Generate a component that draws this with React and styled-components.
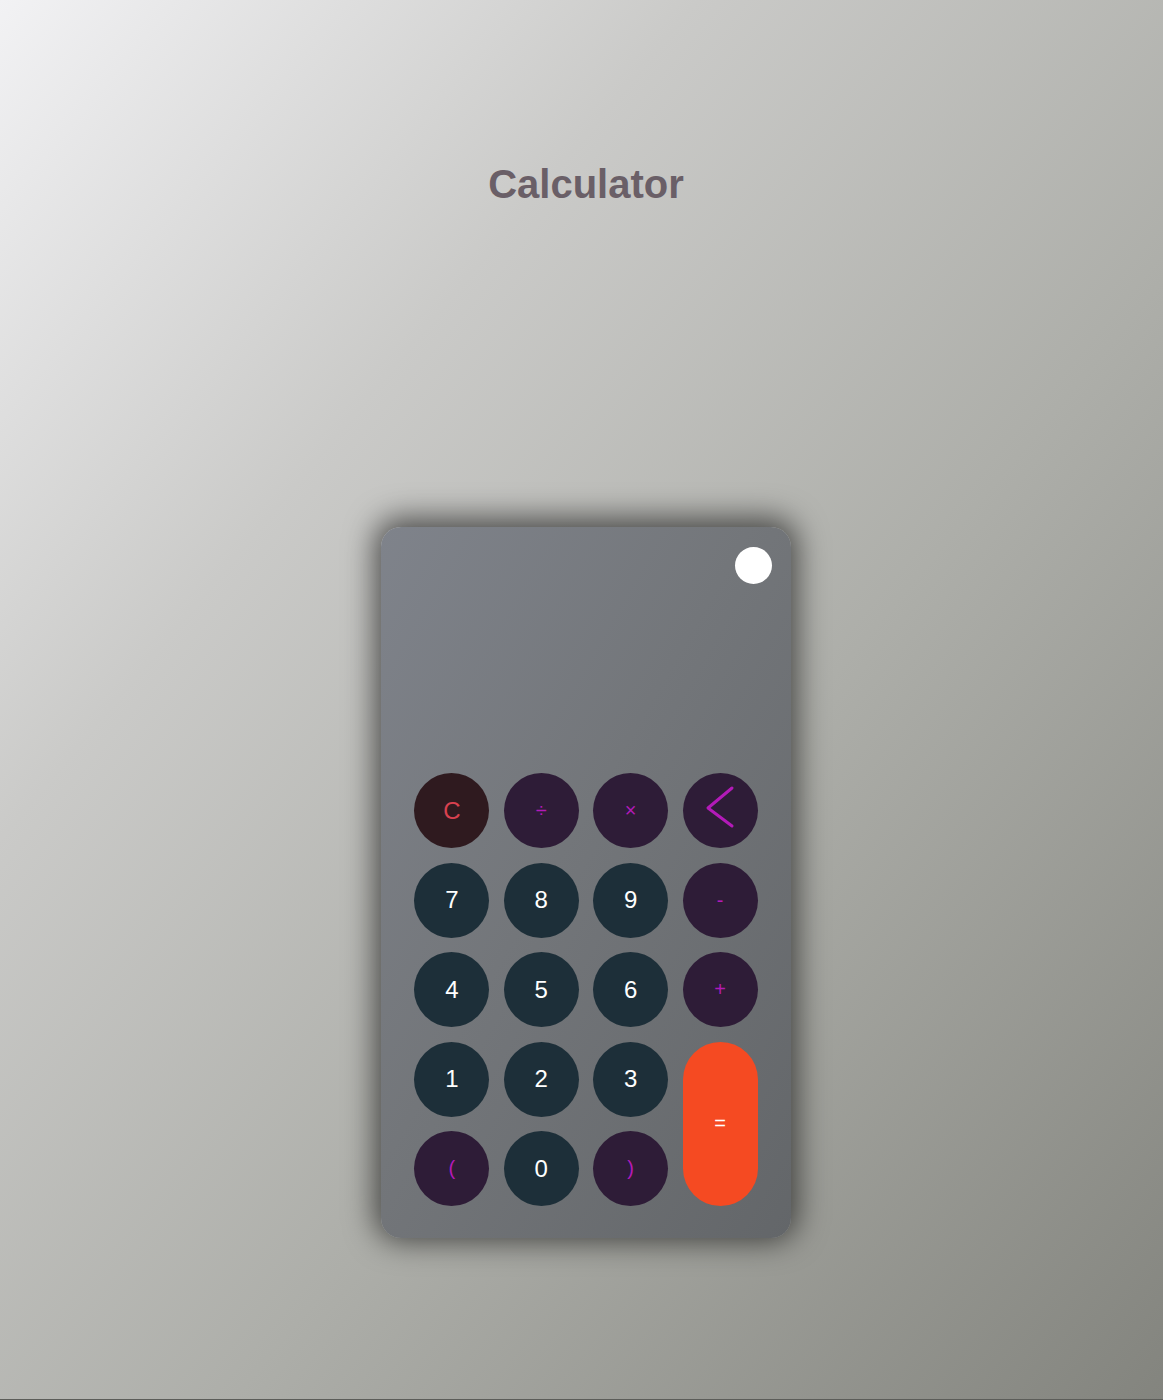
import React from 'react';
import styled, { createGlobalStyle } from 'styled-components';

const GlobalStyle = createGlobalStyle`
  html, body {
    margin: 0;
    padding: 0;
    background: #5c5d59;
  }
  body {
    font-family: "Liberation Sans", Arial, sans-serif;
  }
`;

const Page = styled.div`
  height: 1399px;
  padding-left: 9px;
  box-sizing: border-box;
  display: flex;
  flex-direction: column;
  align-items: center;
  background: linear-gradient(to bottom right, #f2f2f4 0%, #cacac8 30%, #adaea9 60%, #83847e 100%);
`;

const Title = styled.h1`
  margin: 161px 0 0;
  font-size: 40px;
  line-height: 46px;
  font-weight: 700;
  color: #6a5f67;
`;

const Card = styled.div`
  margin-top: 320px;
  width: 410px;
  height: 711px;
  border-radius: 20px;
  display: flex;
  flex-direction: column;
  background: linear-gradient(to bottom right, #7f838b 0%, #73767a 45%, #636669 100%);
  box-shadow: 0 -3px 30px 6px rgba(0, 0, 0, 0.6);
`;

const Display = styled.div`
  height: 246px;
  display: flex;
  justify-content: flex-end;
  align-items: flex-start;
  padding: 20px 19px 0;
  box-sizing: border-box;
`;

const Toggle = styled.div`
  width: 37px;
  height: 37px;
  border-radius: 50%;
  background: #ffffff;
`;

const Keypad = styled.div`
  display: grid;
  grid-template-columns: repeat(4, 75px);
  grid-auto-rows: 75px;
  gap: 14.5px 14.4px;
  justify-content: center;
`;

const kinds = {
  clear: { bg: '#2f1a1f', fg: '#d8414f' },
  op: { bg: '#2e1c37', fg: '#b31ab8' },
  num: { bg: '#1d2f39', fg: '#ffffff' },
  equals: { bg: '#f54a22', fg: '#ffffff' },
};

const Key = styled.button`
  border: none;
  padding: 0;
  border-radius: 40px;
  display: flex;
  align-items: center;
  justify-content: center;
  font-family: "Liberation Sans", Arial, sans-serif;
  font-size: ${p => (p.$kind === 'num' || p.$kind === 'clear' ? '24px' : '20px')};
  background: ${p => kinds[p.$kind].bg};
  color: ${p => kinds[p.$kind].fg};
  grid-row: ${p => (p.$tall ? 'span 2' : 'auto')};
  cursor: pointer;
`;

const BackIcon = () => (
  <svg width="75" height="75" viewBox="0 0 75 75">
    <path d="M49 15 L25 35 L49 53" fill="none" stroke="#b31ab8" strokeWidth="3" strokeLinecap="round" strokeLinejoin="round" />
  </svg>
);

const keys = [
  { label: 'C', kind: 'clear' },
  { label: '÷', kind: 'op' },
  { label: '×', kind: 'op' },
  { label: 'back', kind: 'op' },
  { label: '7', kind: 'num' },
  { label: '8', kind: 'num' },
  { label: '9', kind: 'num' },
  { label: '-', kind: 'op' },
  { label: '4', kind: 'num' },
  { label: '5', kind: 'num' },
  { label: '6', kind: 'num' },
  { label: '+', kind: 'op' },
  { label: '1', kind: 'num' },
  { label: '2', kind: 'num' },
  { label: '3', kind: 'num' },
  { label: '=', kind: 'equals', tall: true },
  { label: '(', kind: 'op' },
  { label: '0', kind: 'num' },
  { label: ')', kind: 'op' },
];

export default function App() {
  return (
    <>
      <GlobalStyle />
      <Page>
        <Title>Calculator</Title>
        <Card>
          <Display>
            <Toggle />
          </Display>
          <Keypad>
            {keys.map(k => (
              <Key key={k.label} $kind={k.kind} $tall={k.tall}>
                {k.label === 'back' ? <BackIcon /> : k.label}
              </Key>
            ))}
          </Keypad>
        </Card>
      </Page>
    </>
  );
}
